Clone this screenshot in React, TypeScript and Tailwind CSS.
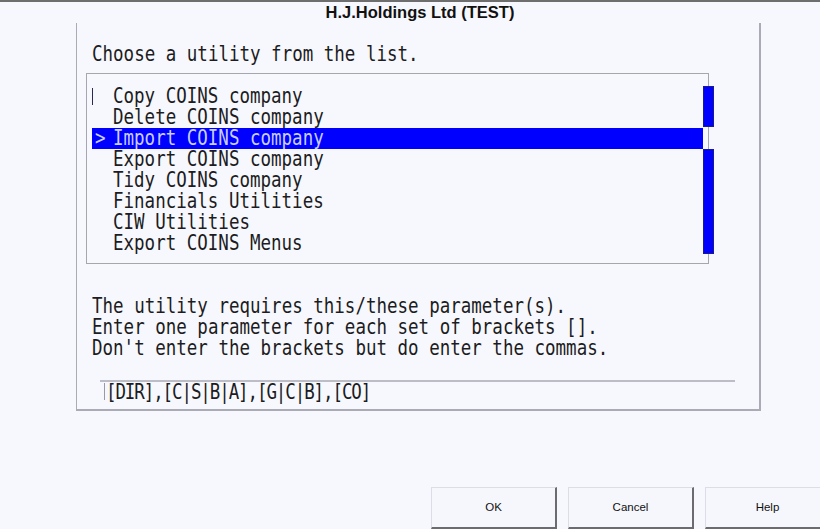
import React from "react";

const mono = "font-['DejaVu_Sans_Mono','Liberation_Mono',monospace] text-[17.5px] leading-[21px] text-[#1c1c22]";

const items = [
  "Copy COINS company",
  "Delete COINS company",
  "Import COINS company",
  "Export COINS company",
  "Tidy COINS company",
  "Financials Utilities",
  "CIW Utilities",
  "Export COINS Menus",
];

const selected = 2;

const Button = ({ label }: { label: string }) => (
  <div className="w-[126px] h-[42px] shrink-0 flex items-center justify-center bg-[#f6f7fc] border-t border-l border-[#dcdde6] border-r-2 border-b-2 border-r-[#6c6c70] border-b-[#6c6c70] font-['Liberation_Sans',Arial,sans-serif] text-[11.5px] text-[#111]">
    {label}
  </div>
);

export default function App() {
  return (
    <div className="w-[820px] h-[529px] overflow-hidden bg-[#f7f8fd] border-t-2 border-[#6e6e6e] flex flex-col">
      {/* Title */}
      <div className="h-[21px] pl-[20px] flex items-center justify-center font-['Liberation_Sans',Arial,sans-serif] font-bold text-[16.5px] text-[#111]">
        H.J.Holdings Ltd (TEST)
      </div>

      {/* Main panel */}
      <div className="ml-[76px] w-[685px] h-[388px] shrink-0 border-l border-r-2 border-b-2 border-[#ababb6] pl-[15px] pt-[21px] flex flex-col">
        <div className={`${mono} scale-y-[1.18]`}>Choose a utility from the list.</div>

        {/* List box */}
        <div className="-ml-[6px] mt-[8px] w-[623px] h-[191px] border border-[#a6a6b0] pt-[12px] pl-[5px] flex">
          <div className="w-[611px] shrink-0 flex flex-col">
            {items.map((item, i) => {
              const active = i === selected;
              return (
                <div
                  key={item}
                  className={`h-[21px] flex items-center ${active ? "bg-[#0000ff] text-[#c8ceff]" : ""}`}
                >
                  <div className="w-[21px] h-[21px] shrink-0 flex items-center pl-[3px]">
                    {i === 0 && <div className="w-px h-[17px] bg-[#2a2a50] -ml-[3px]" />}
                    {active && <span className={`${mono} !text-[#c8ceff] scale-y-[1.18]`}>&gt;</span>}
                  </div>
                  <span className={`${mono} scale-y-[1.18] ${active ? "!text-[#c8ceff]" : ""}`}>{item}</span>
                </div>
              );
            })}
          </div>
          <div className="w-[11px] shrink-0 flex flex-col">
            <div className="h-[41px] bg-[#0000ff] border border-[#1a1a90]" />
            <div className="h-[22px]" />
            <div className="h-[105px] bg-[#0000ff] border border-[#1a1a90]" />
          </div>
        </div>

        {/* Description */}
        <div className="mt-[32px] flex flex-col">
          <div className={`${mono} scale-y-[1.18]`}>The utility requires this/these parameter(s).</div>
          <div className={`${mono} scale-y-[1.18]`}>Enter one parameter for each set of brackets [].</div>
          <div className={`${mono} scale-y-[1.18]`}>Don't enter the brackets but do enter the commas.</div>
        </div>

        {/* Parameter input */}
        <div className="ml-[8px] mt-[21px] w-[635px] border-t-2 border-[#bdbdc8] flex items-start pl-[4px]">
          <div className="w-px h-[17px] mt-[1px] bg-[#9a9aa6]" />
          <div className={`${mono} leading-[17px] ml-[1px] tracking-[-1.1px] scale-y-[1.18]`}>
            [DIR],[C|S|B|A],[G|C|B],[CO]
          </div>
        </div>
      </div>

      {/* Buttons */}
      <div className="mt-[76px] ml-[431px] flex gap-[11px]">
        <Button label="OK" />
        <Button label="Cancel" />
        <Button label="Help" />
      </div>
    </div>
  );
}
